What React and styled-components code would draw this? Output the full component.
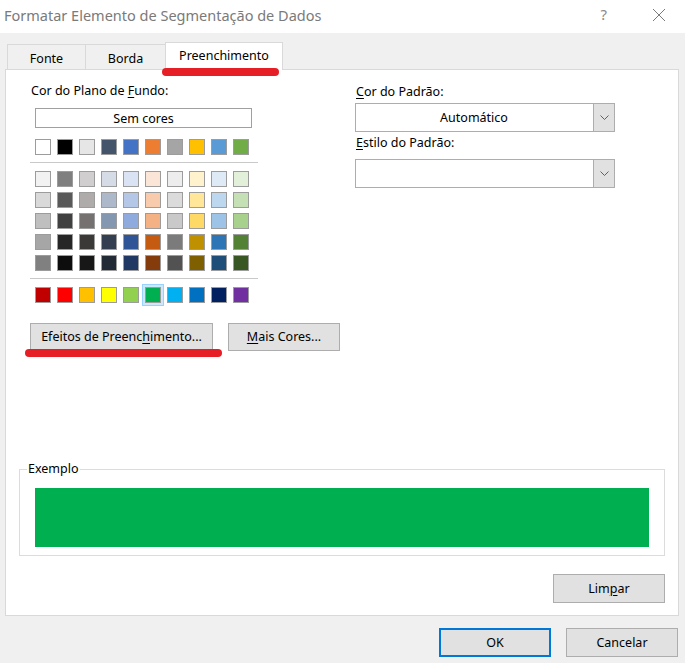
import React from 'react'
import styled, { createGlobalStyle, css } from 'styled-components'

const GlobalStyle = createGlobalStyle`
  html, body {
    margin: 0;
    padding: 0;
    background: #f0f0f0;
  }
  body {
    font-family: "Noto Sans", "Liberation Sans", sans-serif;
    font-size: 12.5px;
    color: #000;
  }
  * { box-sizing: border-box; }
`

const themeRow = ['#FFFFFF', '#000000', '#E7E6E6', '#44546A', '#4472C4', '#ED7D31', '#A5A5A5', '#FFC000', '#5B9BD5', '#70AD47']

const tintRows = [
  ['#F2F2F2', '#7F7F7F', '#D0CECE', '#D6DCE5', '#DAE3F3', '#FBE5D6', '#EDEDED', '#FFF2CC', '#DEEBF7', '#E2F0D9'],
  ['#D9D9D9', '#595959', '#AFABAB', '#ADB9CA', '#B4C7E7', '#F8CBAD', '#DBDBDB', '#FFE699', '#BDD7EE', '#C5E0B4'],
  ['#BFBFBF', '#404040', '#767171', '#8497B0', '#8FAADC', '#F4B183', '#C9C9C9', '#FFD966', '#9DC3E6', '#A9D18E'],
  ['#A6A6A6', '#262626', '#3B3838', '#333F50', '#2F5597', '#C55A11', '#7B7B7B', '#BF9000', '#2E75B6', '#548235'],
  ['#808080', '#0D0D0D', '#171717', '#222A35', '#203864', '#843C0C', '#525252', '#7F6000', '#1F4E79', '#385723'],
]

const standardRow = ['#C00000', '#FF0000', '#FFC000', '#FFFF00', '#92D050', '#00B050', '#00B0F0', '#0070C0', '#002060', '#7030A0']

const Dialog = styled.div`
  width: 685px;
  height: 663px;
  background: #f0f0f0;
  display: flex;
  flex-direction: column;
  overflow: hidden;
`

const TitleBar = styled.div`
  height: 33px;
  background: #fff;
  display: flex;
  align-items: center;
  padding: 0 0 4px 4px;
`

const Title = styled.div`
  flex: 1;
  font-size: 14.5px;
  color: #7a7a7a;
`

const TitleButtons = styled.div`
  display: flex;
  align-items: center;
  gap: 45px;
  padding-right: 19px;
`

const HelpMark = styled.span`
  font-size: 15px;
  color: #8a8a8a;
  padding-bottom: 2px;
`

const Body = styled.div`
  padding: 9px 6px 0 5px;
`

const TabStrip = styled.div`
  display: flex;
  align-items: flex-end;
  height: 27px;
  padding-left: 2px;
  position: relative;
  z-index: 1;
`

const Tab = styled.div`
  position: relative;
  width: ${p => p.$w}px;
  height: 25px;
  border: 1px solid #d9d9d9;
  border-bottom: none;
  border-right: none;
  background: #f0f0f0;
  text-align: center;
  line-height: 24px;
  padding-top: 2px;
  ${p => p.$active && css`
    height: 28px;
    margin-bottom: -1px;
    background: #fff;
    border-right: 1px solid #d9d9d9;
    padding-top: 1px;
  `}
`

const Mark = styled.span`
  position: absolute;
  left: ${p => p.$left}px;
  top: ${p => p.$top}px;
  width: ${p => p.$w}px;
  height: 8px;
  border-radius: 4px;
  background: #e61e25;
`

const Panel = styled.div`
  height: 547px;
  background: #fff;
  border: 1px solid #d9d9d9;
  display: flex;
  flex-direction: column;
`

const TopRow = styled.div`
  display: flex;
  padding: 13px 0 0 24px;
`

const LeftCol = styled.div`
  width: 228px;
  flex-shrink: 0;
  display: flex;
  flex-direction: column;
`

const RightCol = styled.div`
  width: 260px;
  flex-shrink: 0;
  margin-left: 97px;
  display: flex;
  flex-direction: column;
`

const Label = styled.div`
  line-height: 16px;
  padding-left: 1px;
  white-space: nowrap;
  margin-top: ${p => p.$mt || 0}px;
`

const Mn = styled.span`
  text-decoration: underline;
  text-underline-offset: 2px;
  text-decoration-thickness: 1px;
`

const NoColor = styled.div`
  width: 217px;
  height: 20px;
  margin: 9px 0 0 5px;
  border: 1px solid #a0a0a0;
  text-align: center;
  line-height: 17px;
  padding-top: 1px;
`

const SwatchRow = styled.div`
  display: flex;
  gap: 6px;
  padding-left: 5px;
  margin-top: ${p => p.$mt || 0}px;
`

const SwatchGrid = styled.div`
  display: flex;
  flex-direction: column;
  gap: 5px;
  margin-top: 8px;
`

const Swatch = styled.div`
  width: 16px;
  height: 16px;
  flex-shrink: 0;
  border: 1px solid #9c9c9c;
  background: ${p => p.$color};
  ${p => p.$selected && css`
    box-shadow: 0 0 0 2px #cce8ff, 0 0 0 3px #99d1ff;
  `}
`

const Separator = styled.div`
  height: 1px;
  background: #c9c9c9;
  margin-top: 7px;
`

const ButtonRow = styled.div`
  display: flex;
  gap: 15px;
  margin-top: 20px;
`

const Button = styled.div`
  position: relative;
  flex-shrink: 0;
  white-space: nowrap;
  width: ${p => p.$w}px;
  height: ${p => p.$h || 28}px;
  background: #e1e1e1;
  border: 1px solid #adadad;
  text-align: center;
  line-height: ${p => (p.$h || 28) - 2}px;
  ${p => p.$default && css`
    border: 2px solid #0078d7;
    line-height: ${(p.$h || 28) - 4}px;
  `}
`

const Combo = styled.div`
  display: flex;
  height: 29px;
  border: 1px solid #adadad;
  background: #fff;
  margin-top: ${p => p.$mt || 0}px;
`

const ComboValue = styled.div`
  flex: 1;
  text-align: center;
  line-height: 27px;
`

const DropButton = styled.div`
  width: 21px;
  margin-left: 1px;
  background: #e1e1e1;
  border-left: 1px solid #adadad;
  display: flex;
  align-items: center;
  justify-content: center;
`

const Group = styled.fieldset`
  margin: 110px 13px 0;
  padding: 0 15px 8px;
  border: 1px solid #dcdcdc;
  min-width: 0;
`

const Legend = styled.legend`
  padding: 0 1px;
  margin-left: -8px;
  line-height: 16px;
`

const Preview = styled.div`
  height: 59px;
  margin-top: 11px;
  background: ${p => p.$color};
`

const PanelActions = styled.div`
  display: flex;
  justify-content: flex-end;
  padding-right: 13px;
  margin-top: 18px;
`

const Footer = styled.div`
  display: flex;
  justify-content: flex-end;
  gap: 15px;
  padding-right: 1px;
  margin-top: 12px;
`

const Chevron = () => (
  <svg width="9" height="5" viewBox="0 0 9 5">
    <polyline points="0.5,0.5 4.5,4.5 8.5,0.5" fill="none" stroke="#606060" strokeWidth="1" />
  </svg>
)

const CloseIcon = () => (
  <svg width="14" height="14" viewBox="0 0 14 14">
    <path d="M1 1 L13 13 M13 1 L1 13" stroke="#7a7a7a" strokeWidth="1" fill="none" />
  </svg>
)

export default function App() {
  const selected = '#00B050'
  return (
    <>
      <GlobalStyle />
      <Dialog>
        <TitleBar>
          <Title>Formatar Elemento de Segmentação de Dados</Title>
          <TitleButtons>
            <HelpMark>?</HelpMark>
            <CloseIcon />
          </TitleButtons>
        </TitleBar>
        <Body>
          <TabStrip>
            <Tab $w={78}>Fonte</Tab>
            <Tab $w={80}>Borda</Tab>
            <Tab $w={118} $active>
              Preenchimento
              <Mark $left={-4} $top={25} $w={117} />
            </Tab>
          </TabStrip>
          <Panel>
            <TopRow>
              <LeftCol>
                <Label>Cor do Plano de <Mn>F</Mn>undo:</Label>
                <NoColor>Sem cores</NoColor>
                <SwatchRow $mt={11}>
                  {themeRow.map(c => <Swatch key={c} $color={c} />)}
                </SwatchRow>
                <Separator />
                <SwatchGrid>
                  {tintRows.map((row, i) => (
                    <SwatchRow key={i}>
                      {row.map(c => <Swatch key={c} $color={c} />)}
                    </SwatchRow>
                  ))}
                </SwatchGrid>
                <Separator />
                <SwatchRow $mt={8}>
                  {standardRow.map(c => <Swatch key={c} $color={c} $selected={c === selected} />)}
                </SwatchRow>
                <ButtonRow>
                  <Button $w={183}>
                    Efeitos de Preenc<Mn>h</Mn>imento...
                    <Mark $left={-6} $top={25} $w={197} />
                  </Button>
                  <Button $w={112}><Mn>M</Mn>ais Cores...</Button>
                </ButtonRow>
              </LeftCol>
              <RightCol>
                <Label $mt={1}><Mn>C</Mn>or do Padrão:</Label>
                <Combo $mt={3}>
                  <ComboValue>Automático</ComboValue>
                  <DropButton><Chevron /></DropButton>
                </Combo>
                <Label $mt={3}><Mn>E</Mn>stilo do Padrão:</Label>
                <Combo $mt={8}>
                  <ComboValue />
                  <DropButton><Chevron /></DropButton>
                </Combo>
              </RightCol>
            </TopRow>
            <Group>
              <Legend>Exemplo</Legend>
              <Preview $color={selected} />
            </Group>
            <PanelActions>
              <Button $w={112} $h={29}>Lim<Mn>p</Mn>ar</Button>
            </PanelActions>
          </Panel>
          <Footer>
            <Button $w={112} $h={29} $default>OK</Button>
            <Button $w={112} $h={29}>Cancelar</Button>
          </Footer>
        </Body>
      </Dialog>
    </>
  )
}
